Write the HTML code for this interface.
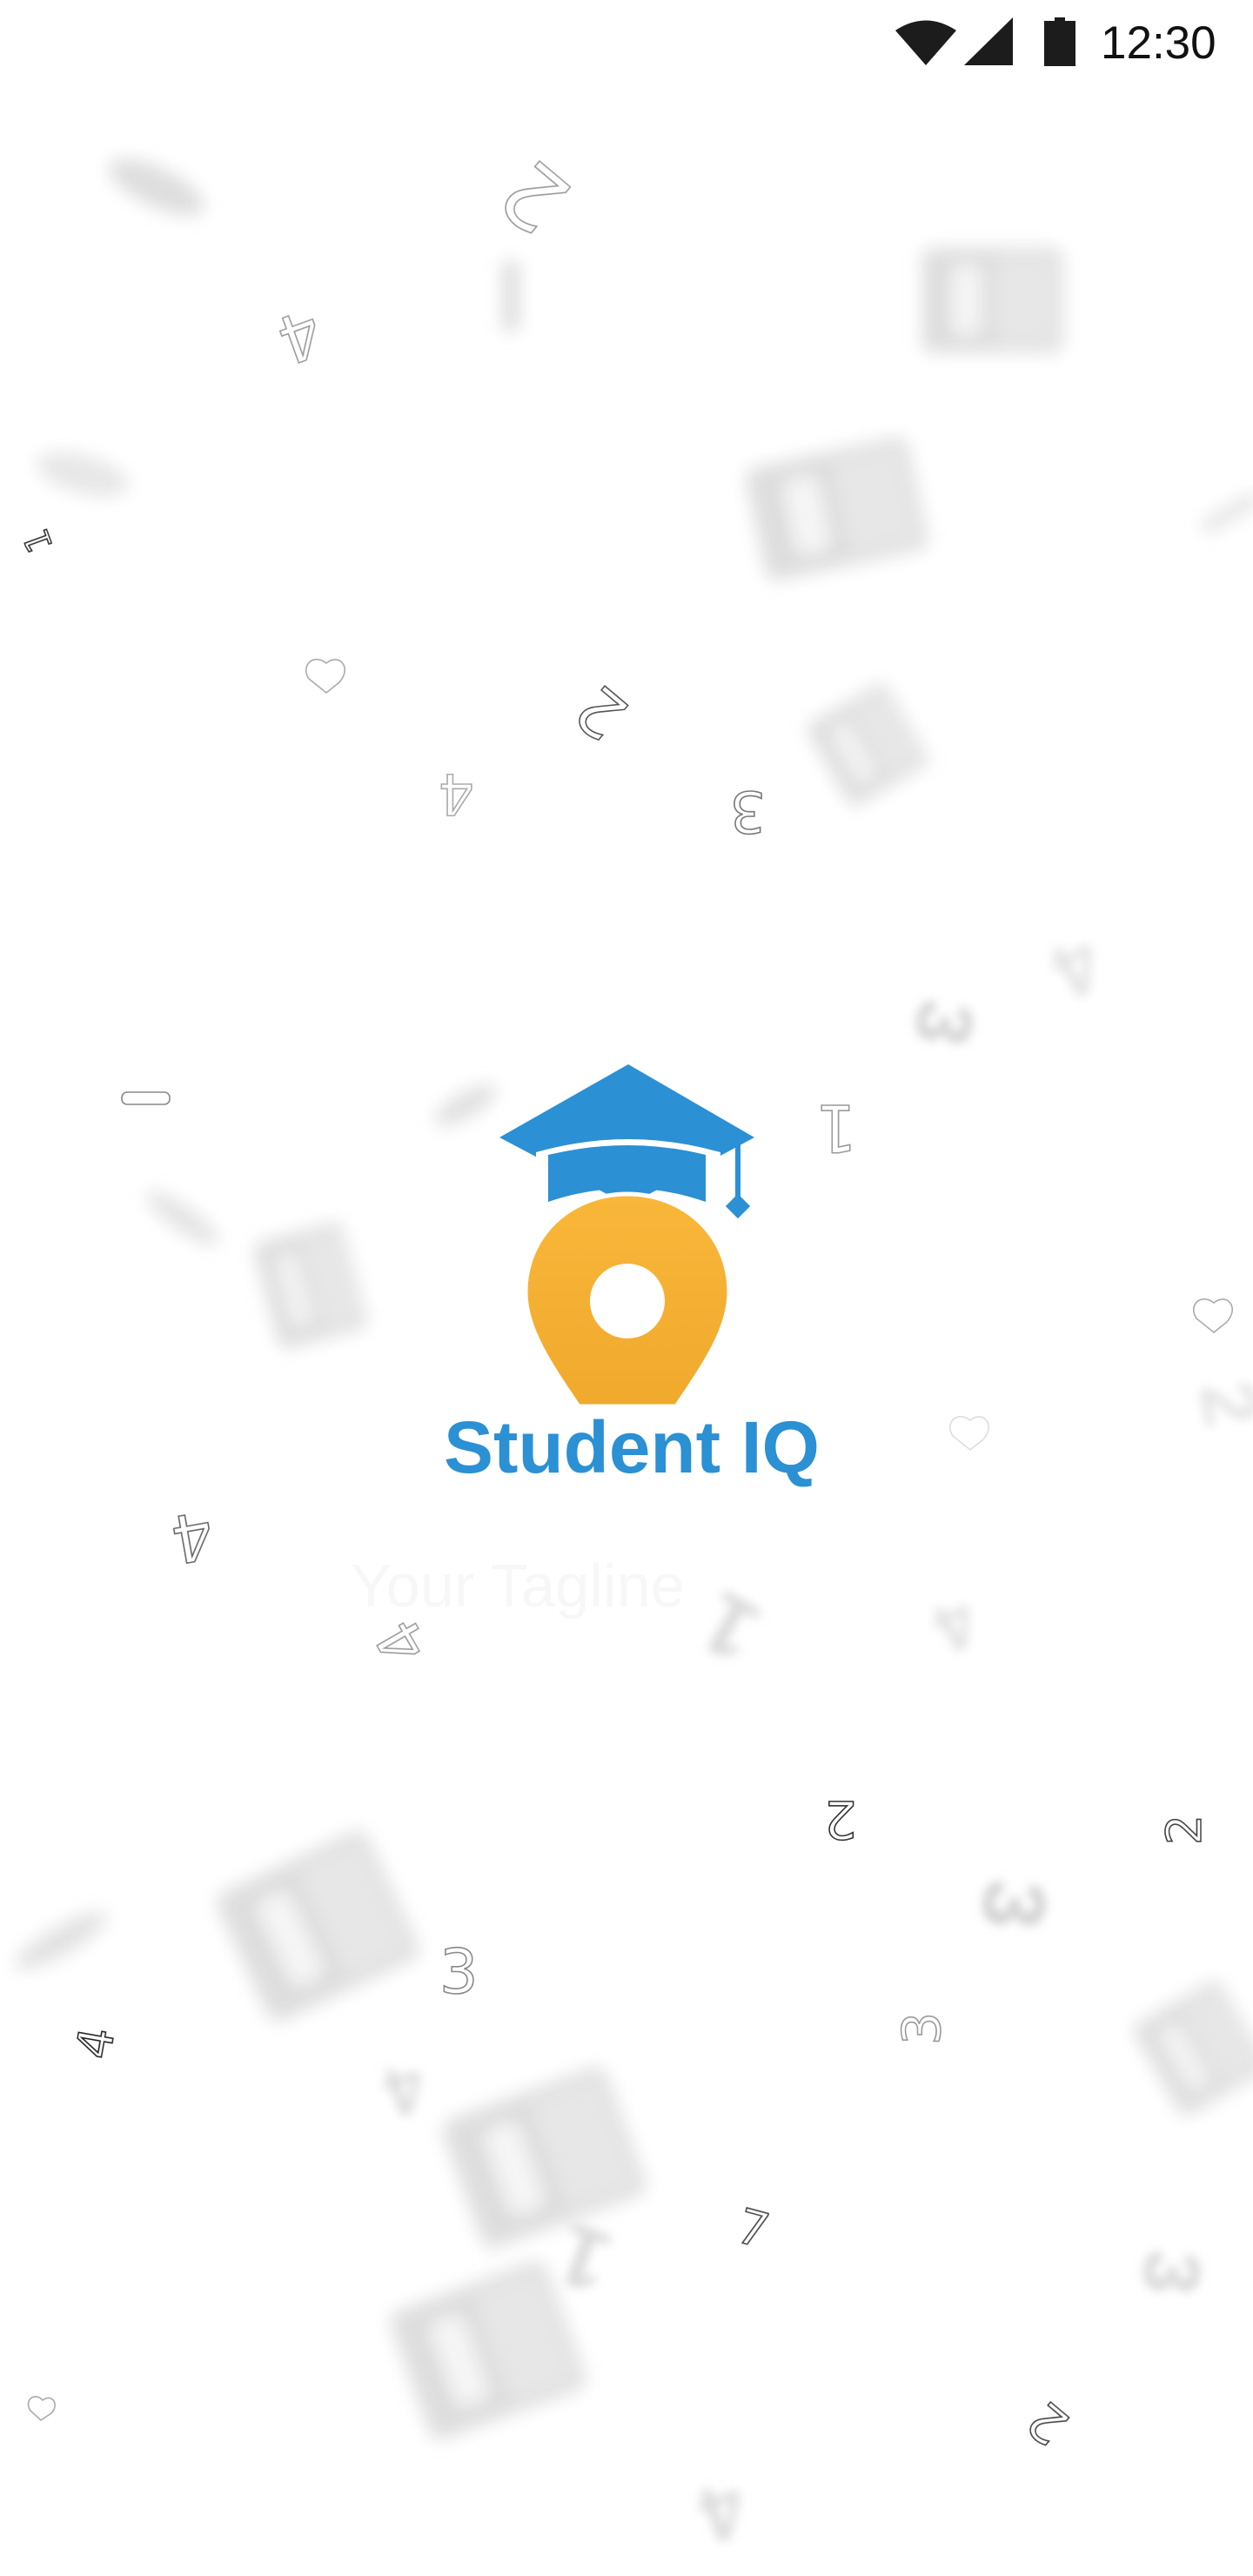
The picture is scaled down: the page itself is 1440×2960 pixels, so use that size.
<!DOCTYPE html>
<html><head><meta charset="utf-8"><style>
html,body{margin:0;padding:0;background:#fff;}
body{width:1440px;height:2960px;position:relative;overflow:hidden;font-family:"Liberation Sans",sans-serif;}
svg{position:absolute;left:0;top:0;}
</style></head><body>
<svg width="1440" height="2960" viewBox="0 0 1440 2960" xmlns="http://www.w3.org/2000/svg">
<defs>
<filter id="b" x="-50%" y="-50%" width="200%" height="200%"><feGaussianBlur stdDeviation="10"/></filter>
<filter id="b2" x="-50%" y="-50%" width="200%" height="200%"><feGaussianBlur stdDeviation="6"/></filter>
<g id="book"><rect x="0" y="0" width="190" height="120" rx="12" fill="#dcdcdc"/><rect x="40" y="20" width="40" height="80" rx="10" fill="#f6f6f6"/><rect x="100" y="10" width="80" height="100" fill="#e6e6e6"/></g>
<linearGradient id="og" x1="0" y1="0" x2="0" y2="1"><stop offset="0" stop-color="#f9b73a"/><stop offset="1" stop-color="#f0a92c"/></linearGradient>
</defs>

<g filter="url(#b)" opacity="0.95">
<use href="#book" transform="translate(1060,285) scale(0.85,1)"/>
<use href="#book" transform="translate(855,540) rotate(-12) scale(1,1.1)"/>
<use href="#book" transform="translate(925,835) rotate(-30) scale(0.55,0.9)"/>
<use href="#book" transform="translate(290,1430) rotate(-15) scale(0.55,1.05)"/>
<use href="#book" transform="translate(245,2180) rotate(-25) scale(1,1.35)"/>
<use href="#book" transform="translate(505,2440) rotate(-20) scale(1.05,1.3)"/>
<use href="#book" transform="translate(445,2660) rotate(-20) scale(1,1.3)"/>
<use href="#book" transform="translate(1300,2330) rotate(-30) scale(0.6,1)"/>
<ellipse cx="180" cy="215" rx="60" ry="22" fill="#dcdcdc" transform="rotate(25 180 215)"/>
<ellipse cx="95" cy="545" rx="55" ry="22" fill="#e6e6e6" transform="rotate(15 95 545)"/>
<ellipse cx="210" cy="1400" rx="50" ry="14" fill="#e2e2e2" transform="rotate(35 210 1400)"/>
<ellipse cx="70" cy="2230" rx="60" ry="16" fill="#e0e0e0" transform="rotate(-30 70 2230)"/>
<ellipse cx="535" cy="1270" rx="40" ry="14" fill="#dedede" transform="rotate(-30 535 1270)"/>
<rect x="578" y="300" width="18" height="80" fill="#d8d8d8"/>
<rect x="1380" y="600" width="70" height="16" fill="#e2e2e2" transform="rotate(-30 1380 600)"/>
</g>
<g filter="url(#b2)" fill="#d0d0d0" font-family="Liberation Sans,sans-serif" font-weight="bold">
<text x="1030" y="1230" font-size="90" transform="rotate(100 1080 1200)">3</text>
<text x="1120" y="2230" font-size="100" transform="rotate(95 1160 2200)" fill="#cfcfcf">3</text>
<text x="1300" y="2640" font-size="90" transform="rotate(95 1335 2620)" fill="#d6d6d6">3</text>
<text x="790" y="1890" font-size="100" fill="#d8d8d8" transform="rotate(-150 830 1860)">1</text>
<text x="640" y="2620" font-size="100" fill="#d8d8d8" transform="rotate(-160 670 2590)">1</text>
<text x="1040" y="1890" font-size="80" fill="#e2e2e2" transform="rotate(150 1080 1870)">4</text>
<text x="1180" y="1130" font-size="90" fill="#e4e4e4" transform="rotate(150 1220 1110)">4</text>
<text x="410" y="2440" font-size="80" fill="#dcdcdc" transform="rotate(160 450 2410)">4</text>
<text x="780" y="2940" font-size="90" fill="#dcdcdc" transform="rotate(160 820 2900)">4</text>
<text x="1390" y="1620" font-size="90" fill="#e4e4e4" transform="rotate(80 1400 1600)">2</text>
</g>

<g fill="none" stroke="#9a9a9a" stroke-width="1.6" font-family="DejaVu Sans,sans-serif">
<text x="580" y="250" font-size="100" transform="rotate(-140 615 220)">2</text>
<text x="320" y="420" font-size="75" transform="rotate(160 345 390)">4</text>
<text x="20" y="630" font-size="40" stroke="#333" transform="rotate(-110 40 615)">1</text>
<text x="660" y="830" font-size="75" stroke="#555" transform="rotate(-140 690 810)">2</text>
<text x="505" y="940" font-size="65" stroke="#aaa" transform="rotate(180 525 915)">4</text>
<text x="850" y="960" font-size="65" stroke="#777" transform="rotate(180 865 935)">3</text>
<text x="955" y="1320" font-size="75" transform="rotate(180 970 1295)">1</text>
<text x="195" y="1790" font-size="75" stroke="#666" transform="rotate(170 220 1765)">4</text>
<text x="435" y="1910" font-size="70" transform="rotate(-120 460 1885)">4</text>
<text x="935" y="2120" font-size="60" stroke="#333" transform="rotate(180 960 2095)">2</text>
<text x="1330" y="2110" font-size="55" stroke="#444" transform="rotate(-90 1360 2090)">2</text>
<text x="505" y="2290" font-size="70" stroke="#888">3</text>
<text x="85" y="2360" font-size="55" stroke="#222" transform="rotate(-80 110 2340)">4</text>
<text x="1030" y="2340" font-size="60" stroke="#999" transform="rotate(-90 1060 2320)">3</text>
<text x="848" y="2580" font-size="55" stroke="#444" transform="rotate(15 865 2560)">7</text>
<text x="1175" y="2800" font-size="60" stroke="#444" transform="rotate(-140 1200 2780)">2</text>
</g>
<g fill="none" stroke="#aaa" stroke-width="1.6">
<path d="M355 780 c-10 -15 5 -30 20 -18 c15 -12 30 5 15 22 l-15 12 z"/>
<path d="M35 2770 c-8 -12 5 -22 14 -12 c10 -8 20 4 10 15 l-12 8 z"/>
<path d="M1375 1515 c-10 -15 5 -30 20 -18 c15 -12 30 5 15 22 l-15 12 z"/>
<path d="M1095 1650 c-10 -15 5 -30 20 -18 c15 -12 30 5 15 22 l-15 12 z" stroke="#ddd"/>
<rect x="140" y="1255" width="55" height="14" rx="6" stroke="#888"/>
</g>

<!-- logo -->
<polygon points="722,1223 867,1307 722,1385 574,1307" fill="#2b90d4"/>
<path d="M616 1324 Q722 1294 828 1324 L828 1345 L616 1345 Z" fill="#fff"/>
<path d="M630 1327 Q722 1305 811 1327 L811 1381 Q722 1350 630 1381 Z" fill="#2b90d4"/>
<rect x="845" y="1315" width="6" height="62" fill="#2b90d4"/>
<rect x="838" y="1376" width="20" height="20" fill="#2b90d4" transform="rotate(45 848 1386)"/>
<path d="M665 1616 C630 1565 604 1525 604 1485 C604 1420 655 1372 721 1372 C787 1372 838 1420 838 1485 C838 1525 812 1565 777 1616 Z" fill="url(#og)" stroke="#fff" stroke-width="5"/>
<circle cx="721" cy="1495" r="43" fill="#fff"/>
<text x="510" y="1692" font-family="Liberation Sans,sans-serif" font-size="84" font-weight="bold" fill="#2b90d4" textLength="432" lengthAdjust="spacingAndGlyphs">Student IQ</text>
<text x="403" y="1846" font-family="Liberation Sans,sans-serif" font-size="70" fill="#f7f7f7" textLength="384" lengthAdjust="spacingAndGlyphs">Your Tagline</text>

<path d="M1029 35 Q1064 12 1099 35 L1064 75 Z" fill="#1c1c1c"/>
<polygon points="1108,75 1164,20 1164,75" fill="#1c1c1c"/>
<rect x="1212" y="20" width="12" height="6" fill="#1c1c1c"/>
<rect x="1200" y="24" width="36" height="52" fill="#1c1c1c"/>
<text x="1265" y="67" font-family="Liberation Sans,sans-serif" font-size="53" fill="#111">12:30</text>
</svg>
</body></html>
